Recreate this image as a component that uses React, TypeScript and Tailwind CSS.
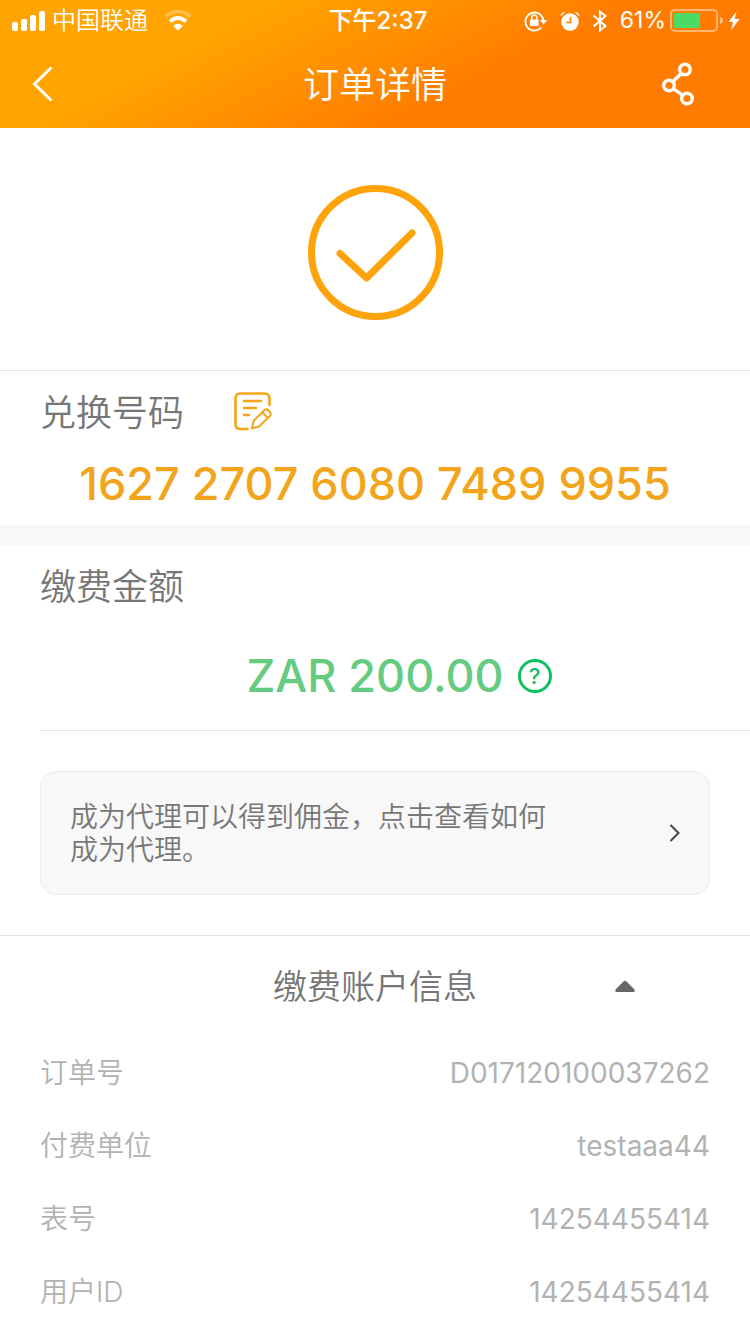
import React from 'react';

const details = [
  { label: '订单号', value: 'D017120100037262' },
  { label: '付费单位', value: 'testaaa44' },
  { label: '表号', value: '14254455414' },
  { label: '用户ID', value: '14254455414' },
];

function SignalIcon() {
  return (
    <svg width="34" height="22" viewBox="0 0 34 22" fill="#fff" aria-hidden="true">
      <rect x="0" y="12" width="6" height="9" rx="2" />
      <rect x="9" y="9" width="6" height="12" rx="2" />
      <rect x="18" y="5" width="6" height="16" rx="2" />
      <rect x="27" y="1" width="6" height="20" rx="2" />
    </svg>
  );
}

function WifiIcon() {
  return (
    <svg width="28" height="22" viewBox="0 0 28 22" aria-hidden="true">
      <path d="M1.500 6.500Q14 -3.500 26.500 6.500" fill="none" stroke="#fff" strokeOpacity=".3" strokeWidth="3.600" />
      <path d="M6 11.500Q14 4.500 22 11.500" fill="none" stroke="#fff" strokeWidth="3.800" />
      <path d="M9 16Q14 11.500 19 16L14 20.500Z" fill="#fff" />
    </svg>
  );
}

function RotationLockIcon() {
  return (
    <svg width="24" height="22" viewBox="0 0 24 22" fill="none" aria-hidden="true">
      <path d="M17.200 17.500A9 9 0 1 1 19.400 10.500" stroke="#fff" strokeWidth="1.800" />
      <path d="M15.800 10H23.200L19.500 14.500Z" fill="#fff" />
      <rect x="6" y="9.500" width="8.600" height="6.500" rx="1" fill="#fff" />
      <path d="M7.800 10V7.500a2.500 2.500 0 0 1 5 0V10" stroke="#fff" strokeWidth="1.500" />
    </svg>
  );
}

function AlarmIcon() {
  return (
    <svg width="20" height="20" viewBox="0 0 20 20" aria-hidden="true">
      <circle cx="10" cy="11" r="8.700" fill="#fff" />
      <path d="M.500 5.500Q.500 1 5.500 1Z M19.500 5.500Q19.500 1 14.500 1Z" fill="#fff" />
      <path d="M10.500 6V11.500H6" stroke="#ff8800" strokeWidth="1.600" fill="none" />
    </svg>
  );
}

function BluetoothIcon() {
  return (
    <svg width="16" height="24" viewBox="0 0 16 24" fill="none" stroke="#fff" strokeWidth="2" aria-hidden="true">
      <path d="M1.500 6.500L13.500 17L8 21.500V2.500L13.500 7L1.500 17.500" />
    </svg>
  );
}

function BatteryIcon() {
  return (
    <svg width="54" height="24" viewBox="0 0 54 24" aria-hidden="true">
      <rect x="1" y="1" width="46" height="21" rx="4" fill="none" stroke="#fff" strokeOpacity=".45" strokeWidth="2" />
      <rect x="4" y="4" width="26" height="15" rx="1" fill="#4cd964" />
      <path d="M50 8Q53 9 53 11.500T50 15Z" fill="#fff" fillOpacity=".5" />
    </svg>
  );
}

function BoltIcon() {
  return (
    <svg width="12" height="20" viewBox="0 0 12 20" fill="#fff" aria-hidden="true">
      <path d="M8.500 0.500L0.500 11H5L3 19.500L11.500 8H6.800Z" />
    </svg>
  );
}

function StatusBar() {
  return (
    <div className="grid h-[41px] grid-cols-[1fr_auto_1fr] items-center pr-2.5 pl-3 text-2xl text-white">
      <div className="flex items-center">
        <SignalIcon />
        <span className="mr-4 ml-1.5 font-[350]">中国联通</span>
        <WifiIcon />
      </div>
      <div className="pl-1 text-center font-[450]">下午2:37</div>
      <div className="flex items-center justify-end">
        <RotationLockIcon />
        <span className="ml-3"><AlarmIcon /></span>
        <span className="ml-3"><BluetoothIcon /></span>
        <span className="mr-1 ml-3 text-[23px]">61%</span>
        <BatteryIcon />
        <span className="ml-1"><BoltIcon /></span>
      </div>
    </div>
  );
}

export default function App() {
  return (
    <div className="min-h-screen bg-white font-['Inter','Noto_Sans_CJK_SC',sans-serif] text-[#777777]">
      <header className="bg-[linear-gradient(153deg,#ffa400_28%,#ff7c00_64%)]">
        <StatusBar />
        <nav className="grid h-[87px] grid-cols-3 items-center px-8 text-white">
          <button type="button" aria-label="返回" className="mb-0.5 justify-self-start">
            <svg width="22" height="38" viewBox="0 0 22 38" fill="none" stroke="#fff" strokeWidth="3">
              <path d="M19.500 2.500L2.500 19L19.500 35.500" />
            </svg>
          </button>
          <h1 className="text-center text-4xl font-[350]">订单详情</h1>
          <button type="button" aria-label="分享" className="mr-6 mb-0.5 justify-self-end">
            <svg width="32" height="44" viewBox="0 0 32 44" fill="none" stroke="#fff" strokeWidth="3.400">
              <circle cx="23" cy="7.500" r="5.300" />
              <circle cx="7" cy="23.500" r="5.300" />
              <circle cx="25" cy="36.500" r="5.300" />
              <path d="M19.300 11.500L10.700 19.700M11.300 26.700L20.700 33.300" />
            </svg>
          </button>
        </nav>
      </header>

      <main>
        <section className="flex justify-center border-b border-[#e2e2e2] pt-14 pb-12">
          <svg width="138" height="138" viewBox="0 0 138 138" fill="none" stroke="#ffa30a" strokeWidth="7" role="img" aria-label="成功">
            <circle cx="69.500" cy="68.500" r="64" />
            <path d="M34 69.500L60.500 94L106 49" strokeLinecap="round" strokeLinejoin="round" />
          </svg>
        </section>

        <section className="border-b-20 border-[#f8f8f8] pt-[18px] pb-2.5">
          <div className="flex items-center px-10">
            <h2 className="text-4xl/12 font-[350]">兑换号码</h2>
            <button type="button" aria-label="复制" className="mb-0.5 ml-[49px]">
              <svg width="40" height="40" viewBox="0 0 40 40" fill="none" stroke="#f5a51c" strokeWidth="2.600" strokeLinecap="round" strokeLinejoin="round">
                <path d="M36.500 13V7Q36.500 1.500 31.500 1.500H7.500Q2.500 1.500 2.500 6.500V32Q2.500 37 7.500 37H14.500" />
                <path d="M11 9H28M11 16H23M11 23H16" />
                <path d="M19 36.500L20.500 29L31.500 18Q33.500 16.500 35.500 18.500L37 20Q38.500 22 37 24L26 34.500Z" strokeWidth="2" />
                <path d="M29.500 20.500L34.500 25.500" strokeWidth="2" />
              </svg>
            </button>
          </div>
          <p className="mt-4 text-center text-[45px]/[62px] font-medium text-[#f2a51b]">1627 2707 6080 7489 9955</p>
        </section>

        <section className="pt-[18px]">
          <h2 className="px-10 text-4xl/12 font-[350]">缴费金额</h2>
          <div className="ml-10 flex items-center justify-center gap-3.5 border-b border-[#e2e2e2] pt-[34px] pb-[23px] pr-3 pl-5">
            <p className="text-[45px]/[62px] font-medium text-[#65cb81]">ZAR 200.00</p>
            <button type="button" aria-label="帮助" className="flex size-[34px] items-center justify-center rounded-full border-3 border-[#0fbf62] text-[22px]/7 font-medium text-[#0fbf62]">
              ?
            </button>
          </div>
        </section>

        <section className="border-b border-[#e2e2e2] p-10">
          <button type="button" className="flex w-full items-center justify-between rounded-2xl border border-[#ebebeb] bg-[#f8f8f8] px-[29px] pt-[29px] pb-[27px] text-left">
            <span className="max-w-[500px] text-[28px]/[33px] font-[350]">成为代理可以得到佣金，点击查看如何成为代理。</span>
            <svg width="12" height="20" viewBox="0 0 12 20" fill="none" stroke="#444" strokeWidth="2" aria-hidden="true">
              <path d="M2.500 1L10.500 9L2.500 17" />
            </svg>
          </button>
        </section>

        <section>
          <button type="button" aria-expanded="true" className="grid h-[100px] w-full grid-cols-[1fr_auto_1fr] items-center">
            <span className="col-start-2 text-[34px] font-[350]">缴费账户信息</span>
            <svg width="20" height="12" viewBox="0 0 20 12" className="ml-[138px]" fill="#666" aria-hidden="true">
              <path d="M1 12Q-.500 10.500 1 9L8.500 1.500Q10 .200 11.500 1.500L19 9Q20.500 10.500 19 12Z" />
            </svg>
          </button>
          <dl className="px-10 text-[28px] font-[350] text-[#b2b2b2]">
            {details.map((row) => (
              <div key={row.label} className="flex h-[73px] items-center justify-between">
                <dt>{row.label}</dt>
                <dd className="font-normal">{row.value}</dd>
              </div>
            ))}
          </dl>
        </section>
      </main>
    </div>
  );
}
